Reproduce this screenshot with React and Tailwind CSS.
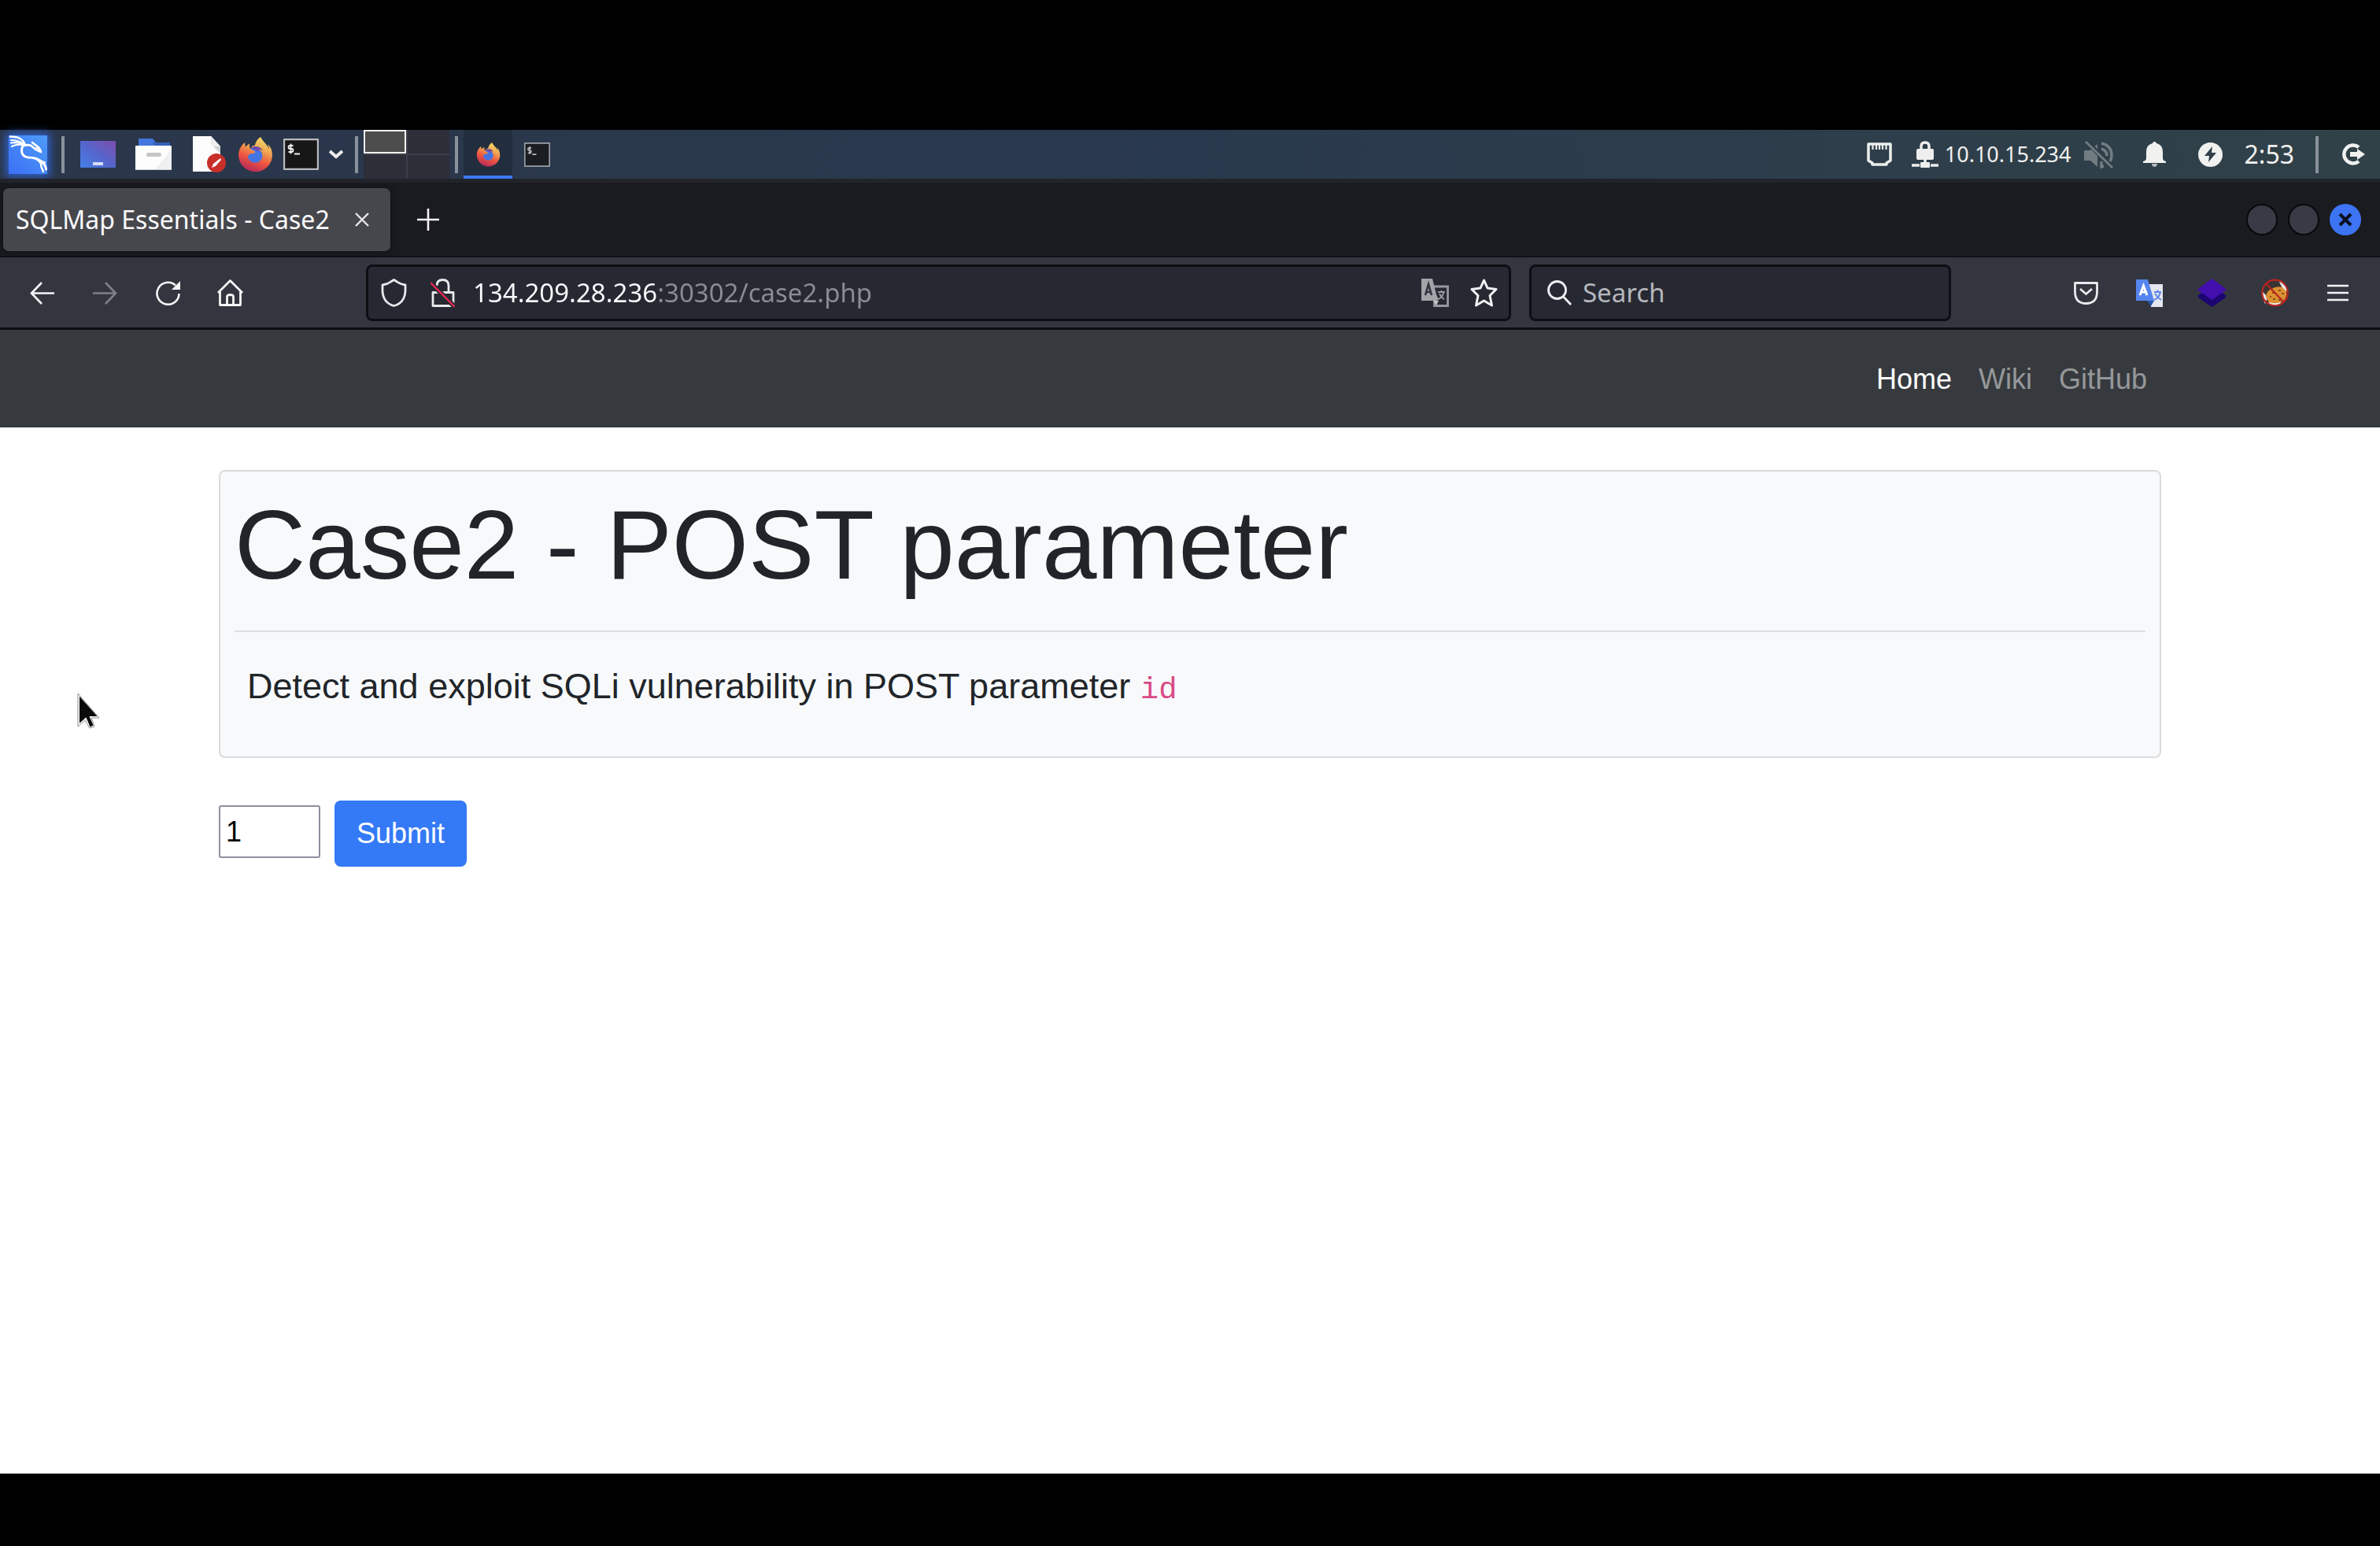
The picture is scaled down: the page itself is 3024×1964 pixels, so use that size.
import React from "react";
import { FaFirefoxBrowser } from "react-icons/fa";

function Divider({ className }) {
  return <span className={"h-[47px] w-1 shrink-0 bg-[#89929c] " + className} />;
}

function Gradients() {
  return (
    <svg className="absolute size-0" aria-hidden="true">
      <defs>
        <linearGradient id="fox" x1="0.75" y1="0" x2="0.35" y2="1">
          <stop offset="0" stopColor="#f6e26c" />
          <stop offset="0.35" stopColor="#f0a552" />
          <stop offset="0.65" stopColor="#ee5540" />
          <stop offset="1" stopColor="#b5285a" />
        </linearGradient>
      </defs>
    </svg>
  );
}

function KaliDragon({ className }) {
  return (
    <svg viewBox="0 0 49 49" className={className} fill="none" stroke="#fff" strokeLinecap="round" strokeLinejoin="round">
      <path d="M2 1.500q9 0 13 3 5 3 6 8" strokeWidth="2.600" />
      <path d="M3 6q9 0 17 5M3 9.500q8-1 16 1.500M4 14q6-3 14-2" strokeWidth="2.200" />
      <path d="M20 11q-3 2-3.500 8 0 8 8 9 12 0 18 6 4 3 5 9" strokeWidth="3" />
      <path d="M20 13q6-2 10 1 3 4 11 7-2-6-6-8l-5-4M33 17l5-1" strokeWidth="2.800" />
      <path d="M35 30q7 4 6.500 10l2.500 6M40 32l6 2.500" strokeWidth="2.400" />
    </svg>
  );
}

function Firefox({ className }) {
  return (
    <span className={"relative block " + className}>
      <svg viewBox="0 0 45 45" className="absolute inset-0 size-full" aria-hidden="true">
        <circle cx="22" cy="24" r="11" fill="#4474e4" />
        <path d="M17 14c4-4 11-3 14 3l-6 1z" fill="#6f4bb0" />
      </svg>
      <FaFirefoxBrowser className="relative size-full" fill="url(#fox)" />
    </span>
  );
}

function Terminal({ className }) {
  return (
    <svg viewBox="0 0 45 40" className={className} preserveAspectRatio="none">
      <rect x="1" y="1" width="43" height="38" rx="1" fill="#171717" stroke="#b9bbbc" strokeWidth="2.4" />
      <path d="M12.500 9H8.500q-2 0-2 2t2 2h2q2 0 2 2t-2 2h-4M9.500 6.500v13" fill="none" stroke="#f2f2f2" strokeWidth="1.800" />
      <path d="M14 19.500h7" stroke="#f2f2f2" strokeWidth="2" />
    </svg>
  );
}

function SystemPanel() {
  return (
    <header className="flex h-[62px] items-center bg-linear-to-r from-[#2b364b] via-[#29394d] to-[#314148] font-['Noto_Sans',sans-serif] text-[#f0f0ee]">
      <button aria-label="Applications" className="ml-[11px] size-[49px] bg-linear-to-tr from-[#3d6ff5] to-[#4f9bf8] shadow-[0_0_10px_3px_#2f62d0]">
        <KaliDragon className="size-[49px]" />
      </button>
      <Divider className="ml-[18px]" />
      <button aria-label="Show desktop" className="ml-5 flex h-[34px] w-[45px] items-end justify-center bg-linear-to-tr from-[#4480ea] via-[#5565cc] to-[#7a4cae] pb-[3px]">
        <span className="h-1 w-[13px] bg-[#d5dcf4]" />
      </button>
      <button aria-label="File manager" className="ml-[25px]">
        <svg viewBox="0 0 46 40" className="h-10 w-[46px]">
          <path d="M4 0h18l4 5h18v6H4z" fill="#4377dd" />
          <path d="M22 5h22v4H24z" fill="#3560bb" />
          <rect x="0" y="9" width="46" height="31" rx="1" fill="#fdfdfd" />
          <path d="M46 14v25H25z" fill="#efefef" />
          <rect x="14" y="18" width="19" height="5" rx="2" fill="#c6c6c6" />
          <path d="M0 39.500h46" stroke="#cfd3d8" />
        </svg>
      </button>
      <button aria-label="Text editor" className="ml-[27px]">
        <svg viewBox="0 0 42 46" className="h-[46px] w-[42px]">
          <path d="M0 0h23l12 13v32H0z" fill="#fcfcfc" />
          <path d="M23 0l12 13v9L23 10z" fill="#d3d3d3" />
          <path d="M23 0l12 13H24z" fill="#efefef" />
          <circle cx="30" cy="34" r="12" fill="#c9302a" />
          <path d="M24 40l2-5 9-7 1 2-7 8z" fill="#fff" />
        </svg>
      </button>
      <button aria-label="Firefox" className="ml-[15px]">
        <Firefox className="size-[45px]" />
      </button>
      <button aria-label="Terminal" className="ml-[13px]">
        <Terminal className="h-10 w-[45px]" />
      </button>
      <button aria-label="More launchers" className="ml-[13px]">
        <svg viewBox="0 0 18 12" className="h-3 w-[18px]" fill="none" stroke="#ececec" strokeWidth="4">
          <path d="M1 2l8 7 8-7" />
        </svg>
      </button>
      <Divider className="ml-[15px]" />
      <div className="ml-[7px] grid h-full w-[109px] grid-cols-2 grid-rows-2 gap-0.5 bg-[#3d3d4b]">
        <button aria-label="Workspace 1" className="border-2 border-[#f2f2f2] bg-[#4d4d4d]" />
        <button aria-label="Workspace 2" className="bg-[#2d2e38]" />
        <button aria-label="Workspace 3" className="bg-[#2d2e38]" />
        <button aria-label="Workspace 4" className="bg-[#2d2e38]" />
      </div>
      <Divider className="ml-[7px]" />
      <button aria-label="Firefox window" className="ml-[7px] flex h-full w-[62px] items-center justify-center border-b-4 border-[#3d78f6] bg-[#222d3e] pt-1">
        <Firefox className="size-[31px]" />
      </button>
      <button aria-label="Terminal window" className="ml-[15px]">
        <Terminal className="h-[31px] w-[33px] opacity-80" />
      </button>

      <div className="ml-auto flex items-center">
        <svg viewBox="0 0 34 30" className="h-[30px] w-[34px]" aria-label="Wired network">
          <path d="M3 2h28v21l-5 3v2H8v-2l-5-3z" fill="none" stroke="#eceeec" strokeWidth="3.500" strokeLinejoin="round" />
          <path d="M8.500 3v6M13 3v6M17 3v6M21 3v6M25.500 3v6" stroke="#eceeec" strokeWidth="2.200" />
        </svg>
        <svg viewBox="0 0 34 34" className="ml-6 h-[34px] w-[34px]" aria-label="VPN">
          <path d="M12 12V7q0-5 5-5t5 5v5" fill="none" stroke="#eee" strokeWidth="3.500" />
          <rect x="6" y="10" width="22" height="14" rx="2" fill="#eee" />
          <path d="M17 24v5M0 31h10M24 31h10" stroke="#eee" strokeWidth="3.500" />
          <rect x="11" y="27" width="12" height="7" rx="1" fill="#eee" />
        </svg>
        <span className="ml-2 text-[27px] leading-8">10.10.15.234</span>
        <svg viewBox="0 0 37 35" className="ml-4 h-[35px] w-[37px]" aria-label="Muted" fill="none" stroke="#717c80">
          <path d="M0 12h8l9-8v29l-9-8H0z" fill="#717c80" stroke="none" />
          <path d="M22 3q13 3 13 15 0 5-2 8M22 10q7 2 7 9M22 26v7l3-1" strokeWidth="3.500" />
          <path d="M3 0l33 35" stroke="#2e3f4a" strokeWidth="6" />
          <path d="M2 1l34 33" strokeWidth="2.800" />
        </svg>
        <svg viewBox="0 0 29 32" className="ml-[38px] h-8 w-[29px]" aria-label="Notifications" fill="#f1f1f0">
          <path d="M14.500 0q2 0 2.500 2 8 2 8 11v8q0 3 4 4v2H0v-2q4-1 4-4v-8q0-9 8-11 .500-2 2.500-2z" />
          <path d="M11 28h7q-.500 4-3.500 4T11 28z" opacity="0.700" />
        </svg>
        <svg viewBox="0 0 31 31" className="ml-[41px] size-[31px]" aria-label="Power">
          <circle cx="15.500" cy="15.500" r="15.500" fill="#f1f1f0" />
          <path d="M18 5L8 17h6l-1 8 10-12h-6z" fill="#303f4a" />
        </svg>
        <time className="ml-7 text-[32px] leading-8">2:53</time>
        <Divider className="ml-[27px]" />
        <button aria-label="Log out" className="mr-[19px] ml-[29px]">
          <svg viewBox="0 0 30 28" className="h-7 w-[30px]">
            <path d="M22 5a11.500 11.500 0 1 0 0 18" fill="none" stroke="#f1f1f0" strokeWidth="4.500" />
            <path d="M11 11h9V7l10 7-10 7v-4h-9z" fill="#f1f1f0" />
          </svg>
        </button>
      </div>
    </header>
  );
}

function TabBar() {
  return (
    <div className="flex h-[100px] items-center border-t-[5px] border-b-2 border-t-[#22242b] border-b-[#101116] bg-[#1a1b20] pt-px pl-1 font-['Noto_Sans',sans-serif] text-[#fbfbfe]">
      <div role="tab" aria-selected="true" className="flex h-20 w-[492px] items-center rounded-[7px] bg-[#46474c] pl-4 shadow-[0_0_6px_#0c0d11]">
        <span className="text-[32px] leading-10">SQLMap Essentials - Case2</span>
        <button aria-label="Close tab" className="mr-[27px] ml-auto">
          <svg viewBox="0 0 18 18" className="size-[18px]" stroke="#e8e8ea" strokeWidth="2.400">
            <path d="M1 1l16 16M17 1L1 17" />
          </svg>
        </button>
      </div>
      <button aria-label="New tab" className="ml-[34px]">
        <svg viewBox="0 0 28 28" className="size-7" stroke="#f4f4f6" strokeWidth="2.600">
          <path d="M14 0v28M0 14h28" />
        </svg>
      </button>
      <div className="mr-6 ml-auto flex items-center gap-[13px]">
        <button aria-label="Minimize" className="size-10 rounded-full border-2 border-[#08090c] bg-[#383a46]" />
        <button aria-label="Maximize" className="size-10 rounded-full border-2 border-[#08090c] bg-[#383a46]" />
        <button aria-label="Close" className="flex size-10 items-center justify-center rounded-full bg-[#3c74f4]">
          <svg viewBox="0 0 18 18" className="size-[18px]" stroke="#0b1020" strokeWidth="4">
            <path d="M2 2l14 14M16 2L2 16" />
          </svg>
        </button>
      </div>
    </div>
  );
}

function Toolbar() {
  return (
    <div className="flex h-[92px] items-center border-b-[3px] border-[#0c0d12] bg-[#34363f] pt-px font-['Noto_Sans',sans-serif]">
      <div className="flex w-[465px] shrink-0 items-center pl-[38px]">
        <button aria-label="Back">
          <svg viewBox="0 0 31 29" className="h-[29px] w-[31px]" fill="none" stroke="#f4f4f6" strokeWidth="2.600">
            <path d="M15 1L2 14.500 15 28M2 14.500h29" />
          </svg>
        </button>
        <button aria-label="Forward" className="ml-[49px]">
          <svg viewBox="0 0 31 29" className="h-[29px] w-[31px]" fill="none" stroke="#808188" strokeWidth="2.600">
            <path d="M16 1l13 13.500L16 28M29 14.500H0" />
          </svg>
        </button>
        <button aria-label="Reload" className="ml-[49px]">
          <svg viewBox="0 0 31 31" className="size-[31px]">
            <path d="M29.500 16A14 14 0 1 1 25 5.500" fill="none" stroke="#f4f4f6" strokeWidth="2.600" />
            <path d="M31 0v11H20z" fill="#f4f4f6" />
          </svg>
        </button>
        <button aria-label="Home" className="ml-[47px]">
          <svg viewBox="0 0 33 34" className="h-[34px] w-[33px]" fill="none" stroke="#f4f4f6" strokeWidth="2.800" strokeLinejoin="round">
            <path d="M1 17L16.500 1.500 32 17M3.500 15v17.500h26V15M12.500 32V22q0-2.500 4-2.500t4 2.500v10" />
          </svg>
        </button>
      </div>

      <div className="flex h-[72px] min-w-0 flex-1 items-center rounded-lg border-[3px] border-[#0d0e13] bg-[#272932] pr-[14px] pl-4">
        <svg viewBox="0 0 33 36" className="h-9 w-[33px] shrink-0" fill="none" stroke="#e9e9ec" strokeWidth="2.800" strokeLinejoin="round">
          <path d="M16.500 1.500l4 2.500q4 3 10.500 4v8q-1 15-14.500 18.500Q3 31 2 16V8q6.500-1 10.500-4z" />
        </svg>
        <svg viewBox="0 0 31 36" className="ml-[30px] h-9 w-[31px] shrink-0" fill="none">
          <path d="M8 9q0-7.500 7.500-7.500T23 9v8M3 17.500h26v17H3z" stroke="#e9e9ec" strokeWidth="2.800" strokeLinejoin="round" />
          <path d="M1 6l29 29" stroke="#272932" strokeWidth="6" />
          <path d="M0 5l31 31" stroke="#e22850" strokeWidth="2.400" />
        </svg>
        <input
          aria-label="Address"
          defaultValue="134.209.28.236:30302/case2.php"
          className="ml-[23px] min-w-0 flex-1 bg-[linear-gradient(to_right,#fbfbfe_235px,#8b8c94_235px)] bg-clip-text text-[33px] leading-10 text-transparent outline-none"
        />
        <button aria-label="Translate page">
          <svg viewBox="0 0 35 36" className="h-9 w-[35px]">
            <path d="M16 10h17.500v24.500h-17V28" fill="none" stroke="#97989e" strokeWidth="2.800" />
            <path d="M0 0h14l5 20 3 7-4 1H0z" fill="#a3a4a9" />
            <path d="M5 21L9 7l4 14M6.500 17h5" fill="none" stroke="#33353e" strokeWidth="2.600" />
            <path d="M21 17h9M25.500 15v2M28.500 17q-2 7-7 9M23 19q2 5 6 7" fill="none" stroke="#97989e" strokeWidth="2" />
            <path d="M15 28l4 6 3-6z" fill="#c3c4c8" />
          </svg>
        </button>
        <button aria-label="Bookmark" className="ml-[27px]">
          <svg viewBox="0 0 35 36" className="h-9 w-[35px]" fill="none" stroke="#f1f1f4" strokeWidth="3" strokeLinejoin="round">
            <path d="M17.500 2l4.500 10 11 1.500-8 8 2.500 12.500-10-6-10 6L10 21.500l-8-8L13 12z" />
          </svg>
        </button>
      </div>

      <label className="ml-[23px] flex h-[72px] w-[536px] shrink-0 items-center rounded-lg border-[3px] border-[#0d0e13] bg-[#272932] pr-4 pl-5">
        <svg viewBox="0 0 31 32" className="h-8 w-[31px] shrink-0" fill="none" stroke="#efeff2" strokeWidth="2.800">
          <circle cx="12.500" cy="12.500" r="11" />
          <path d="M20 20.500l10 10.500" />
        </svg>
        <input
          aria-label="Search"
          placeholder="Search"
          className="ml-[14px] min-w-0 flex-1 bg-transparent text-[33px] leading-10 text-white outline-none placeholder:text-[#b6b7bd]"
        />
      </label>

      <div className="ml-[156px] flex items-center pr-10">
        <button aria-label="Pocket">
          <svg viewBox="0 0 31 29" className="h-[29px] w-[31px]" fill="none" stroke="#e9e9ec" strokeWidth="2.800">
            <path d="M1.500 1.500h28v11q0 15-14 15t-14-15z" strokeLinejoin="round" />
            <path d="M8 9l7.500 6.500L23 9" />
          </svg>
        </button>
        <button aria-label="Google Translate" className="ml-[47px]">
          <svg viewBox="0 0 35 36" className="h-9 w-[35px]">
            <path d="M16 7h19v29H20z" fill="#e4e7ee" />
            <path d="M24 17h9M28.500 14.500V17M32 17q-2 8-8 10M25 19q3 5 8 8" fill="none" stroke="#5c87e6" strokeWidth="2" />
            <path d="M1 1h15l8 27H1z" fill="#5585ee" />
            <path d="M15 28h9l-4 7z" fill="#2b55ac" />
            <path d="M6 21l4.500-12L15 21M7.500 17h6" fill="none" stroke="#fff" strokeWidth="3" />
          </svg>
        </button>
        <button aria-label="Layers extension" className="ml-[45px]">
          <svg viewBox="0 0 35 36" className="h-9 w-[35px]">
            <path d="M0 21l6-4h23l6 4v3L17.500 36 0 24z" fill="#1c0671" />
            <path d="M17.500 0L35 13v2L17.500 27 0 15v-2z" fill="#430fae" />
          </svg>
        </button>
        <button aria-label="Cookie extension" className="ml-[45px]">
          <svg viewBox="0 0 35 36" className="h-9 w-[35px]">
            <circle cx="17.500" cy="18" r="16" fill="#3a3432" />
            <path d="M24 4l8 8-1 5zM2 18l5 6-2 5zM11 31q6 4 13 0l-3-2z" fill="#e9e9ee" stroke="#e9e9ee" strokeWidth="2" />
            <path d="M6 24q0-8 7-11 7-4 14-2l5 5q1 10-5 13-9 4-17 1z" fill="#dc9132" />
            <path d="M14 18h3M22 15h3M26 19h3M15 26h3M11 23h2M22 27h3" stroke="#8a4f18" strokeWidth="2" />
            <circle cx="17.500" cy="18" r="16.300" fill="none" stroke="#b92420" strokeWidth="2.200" />
            <path d="M6 6l23 24" stroke="#b92420" strokeWidth="2.200" />
          </svg>
        </button>
        <button aria-label="Menu" className="ml-[49px]">
          <svg viewBox="0 0 27 22" className="h-[22px] w-[27px]" stroke="#f1f1f4" strokeWidth="2.600">
            <path d="M0 2h27M0 11h27M0 20h27" />
          </svg>
        </button>
      </div>
    </div>
  );
}

function Page() {
  return (
    <main className="relative flex-1 bg-white font-['Liberation_Sans',Arial,sans-serif] text-[#212529]">
      <nav className="bg-[#363a3e]">
        <div className="mx-auto flex h-[124px] max-w-[2468px] items-center justify-end gap-[34px] pt-0.5 pr-[18px] text-4xl text-[#95989a]">
          <a href="#home" className="text-white">Home</a>
          <a href="#wiki">Wiki</a>
          <a href="#github">GitHub</a>
        </div>
      </nav>
      <div className="mx-auto max-w-[2468px] pt-[54px]">
        <section className="rounded-lg border-2 border-[#d9dbdc] bg-[#f8f9fb] px-[18px] pt-[18px] pb-[51px]">
          <h1 className="text-[125px] leading-[150px]">Case2 - POST parameter</h1>
          <hr className="mt-[34px] border-t-2 border-[#dcdee0]" />
          <p className="mt-9 pl-4 text-[45px] leading-[66px]">
            Detect and exploit SQLi vulnerability in POST parameter{" "}
            <code className="font-['Liberation_Mono',monospace] text-[39px] text-[#d94a86]">id</code>
          </p>
        </section>
        <form className="mt-[54px] flex items-start gap-[18px]" onSubmit={(e) => e.preventDefault()}>
          <input
            aria-label="id"
            defaultValue="1"
            className="mt-1.5 h-[67px] w-[129px] rounded-[3px] border-2 border-[#8f8f9d] bg-white px-[7px] text-4xl text-black outline-none"
          />
          <button className="h-[84px] rounded-lg bg-[#3479f6] px-7 text-4xl text-white">Submit</button>
        </form>
      </div>
      <svg viewBox="0 0 29 46" className="absolute top-[461px] left-[98px] h-[46px] w-[29px]" aria-hidden="true">
        <path d="M2 2v39l9-8 5 12 6-3-5-11h11z" fill="#0a0a0a" stroke="#fff" strokeWidth="2" />
        <path d="M1 1v42l9-8 6 10 6-2-4-11h10z" fill="none" stroke="#8c8c8c" strokeWidth="1" />
      </svg>
    </main>
  );
}

export default function App() {
  return (
    <div className="flex min-h-screen flex-col bg-black pt-[165px] pb-[92px]">
      <Gradients />
      <SystemPanel />
      <TabBar />
      <Toolbar />
      <Page />
    </div>
  );
}
